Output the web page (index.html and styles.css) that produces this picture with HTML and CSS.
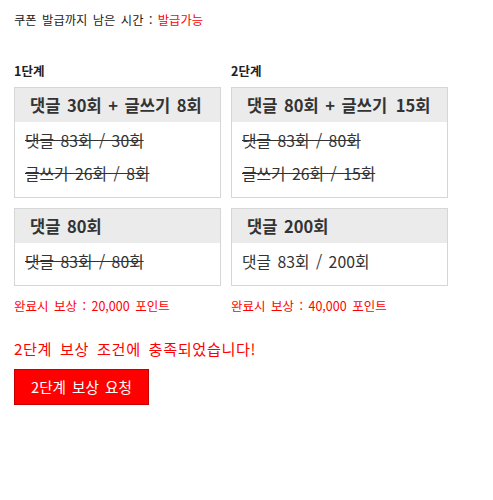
FILE: index.html
```html
<!DOCTYPE html>
<html lang="ko">
<head>
<meta charset="utf-8">
<title>쿠폰 발급</title>
<link rel="stylesheet" href="styles.css">
</head>
<body>
<div class="wrap">
  <p class="timer">쿠폰 발급까지 남은 시간 : <span class="red">발급가능</span></p>
  <div class="stages">
    <div class="stage">
      <div class="stage-title">1단계</div>
      <div class="box">
        <div class="box-head">댓글 30회 + 글쓰기 8회</div>
        <div class="box-body">
          <p class="done">댓글 83회 / 30회</p>
          <p class="done">글쓰기 26회 / 8회</p>
        </div>
      </div>
      <div class="box">
        <div class="box-head">댓글 80회</div>
        <div class="box-body">
          <p class="done">댓글 83회 / 80회</p>
        </div>
      </div>
      <p class="reward">완료시 보상 : 20,000 포인트</p>
    </div>
    <div class="stage">
      <div class="stage-title">2단계</div>
      <div class="box">
        <div class="box-head">댓글 80회 + 글쓰기 <span class="gap">15회</span></div>
        <div class="box-body">
          <p class="done">댓글 83회 / 80회</p>
          <p class="done">글쓰기 26회 / 15회</p>
        </div>
      </div>
      <div class="box">
        <div class="box-head">댓글 200회</div>
        <div class="box-body">
          <p>댓글 83회 / 200회</p>
        </div>
      </div>
      <p class="reward">완료시 보상 : 40,000 포인트</p>
    </div>
  </div>
  <p class="notice">2단계 보상 조건에 충족되었습니다!</p>
  <button class="btn" type="button">2단계 보상 요청</button>
</div>
</body>
</html>
```
FILE: styles.css
```css
html, body {
  margin: 0;
  padding: 0;
  background: #fff;
}
body {
  font-family: "Noto Sans CJK KR", "Noto Sans", sans-serif;
  color: #333;
  word-spacing: 2px;
}
p {
  margin: 0;
}
.wrap {
  padding: 12px 14px;
}
.timer {
  font-size: 12.3px;
  line-height: 16px;
  color: #222;
}
.red {
  color: #ff0000;
}
.stages {
  display: grid;
  grid-template-columns: 207px 217px;
  column-gap: 10px;
  margin-top: 35px;
}
.stage {
  display: flex;
  flex-direction: column;
}
.stage-title {
  font-size: 12.5px;
  line-height: 16px;
  font-weight: bold;
  color: #222;
  margin-bottom: 8px;
}
.box {
  border: 1px solid #d6d6d6;
  background: #fff;
}
.box + .box {
  margin-top: 10px;
}
.box-head {
  background: #ebebeb;
  height: 34px;
  line-height: 34px;
  padding: 0 15px;
  font-size: 16.5px;
  font-weight: bold;
  color: #333;
  white-space: nowrap;
}
.gap {
  margin-left: 2px;
}
.box-body {
  padding: 8px 10px 12px;
}
.box-body p {
  font-size: 15.8px;
  line-height: 22px;
  color: #333;
}
.box-body p + p {
  margin-top: 11px;
}
.done {
  text-decoration: line-through;
}
.reward {
  margin-top: 12px;
  font-size: 12.5px;
  line-height: 16px;
  color: #ff0000;
}
.notice {
  margin-top: 24px;
  font-size: 15.2px;
  line-height: 20px;
  letter-spacing: 0.6px;
  word-spacing: 3px;
  color: #ff0000;
}
.btn {
  display: block;
  margin-top: 11px;
  width: 135px;
  height: 36px;
  padding: 0;
  border: 1px solid #c40000;
  background: #ff0000;
  color: #fff;
  font-family: "Noto Sans CJK KR", "Noto Sans", sans-serif;
  font-size: 14.6px;
  line-height: 34px;
  word-spacing: 2px;
  cursor: pointer;
}
```
